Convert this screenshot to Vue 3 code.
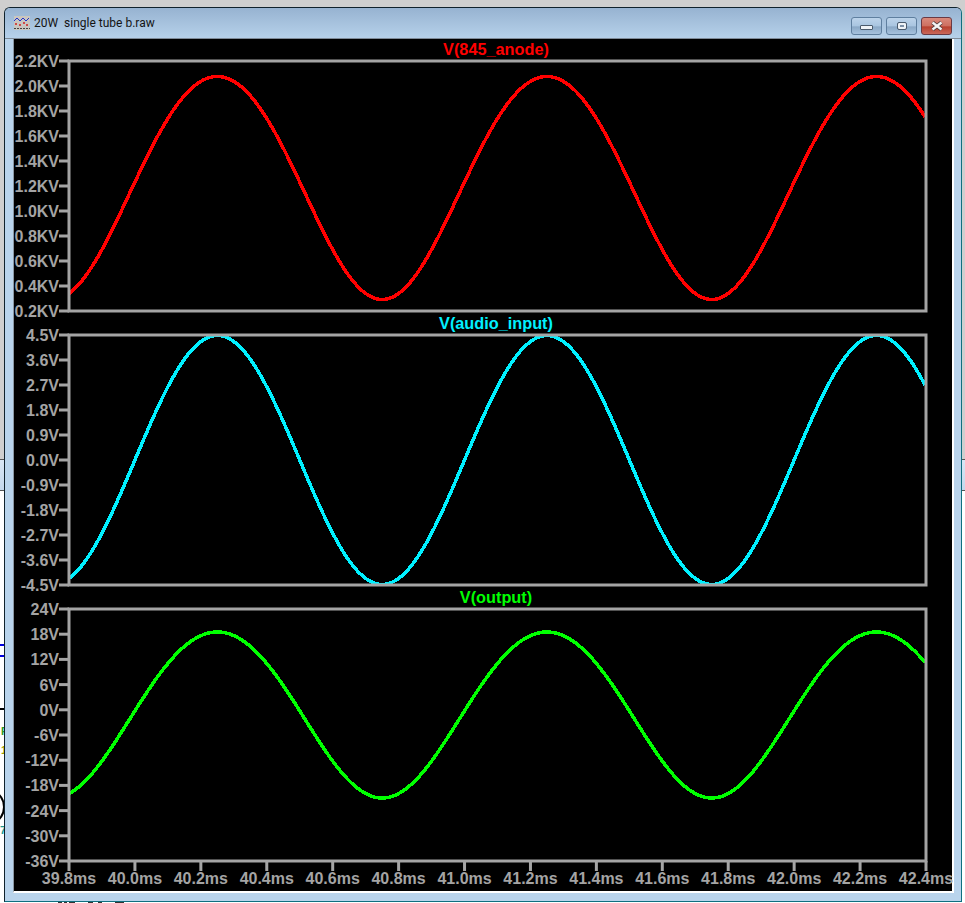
<template>
  <div class="desktop">
    <!-- Schematic editor behind the waveform window -->
    <div class="backdrop">
      <div class="back-top"></div>
      <div class="back-menu"></div>
      <div class="back-sheet"></div>
    </div>
    <svg class="schematic" width="965" height="903">
      <path d="M0 645H5M0 656H5" stroke="#0000e0" stroke-width="2" />
      <path d="M0 709H5" stroke="#000" stroke-width="2" />
      <circle cx="-14" cy="807" r="18" fill="none" stroke="#000" stroke-width="2" />
      <text x="1" y="735" class="bit green">F</text>
      <text x="1" y="754" class="bit olive">1</text>
      <text x="0" y="834" class="bit teal">7</text>
      <path d="M58 902.500h4M64 902.500h3M69 902.500h6M88 902.500h5M98 902.500h4M115 902.500h9" stroke="#333" stroke-width="1" />
    </svg>

    <section class="window">
      <header class="titlebar">
        <svg class="app-icon" width="17" height="16" viewBox="0 0 17 16">
          <rect x="0" y="1" width="16" height="14" fill="#c9c6c0" />
          <path d="M0 6 3 3l3 3 3-3 3 3 3-3" fill="none" stroke="#2233cc" stroke-width="1" />
          <path d="M1 9h2M5 10h2M9 8h2M12 10h2" stroke="#d02020" stroke-width="1.400" />
          <path d="M0 13.500h16" stroke="#444" stroke-width="1" stroke-dasharray="2 1" />
        </svg>
        <span class="caption">{{ caption }}</span>
        <div class="controls">
          <button class="ctl">
            <span class="min-glyph"></span>
          </button>
          <button class="ctl">
            <span class="max-glyph"></span>
          </button>
          <button class="ctl close">
            <svg width="14" height="10" viewBox="0 0 14 10">
              <path d="M2.500 1.500 11.500 8.500M11.500 1.500 2.500 8.500" stroke="#4a3a3a" stroke-width="4" />
              <path d="M2.500 1.500 11.500 8.500M11.500 1.500 2.500 8.500" stroke="#f4f4f4" stroke-width="2.400" />
            </svg>
          </button>
        </div>
      </header>

      <main class="plots">
        <div v-for="pane in panes" :key="pane.title" class="pane">
          <div class="pane-title" :style="{ color: pane.color }">{{ pane.title }}</div>
          <svg class="pane-plot" width="939" :height="pane.svgHeight">
            <g v-for="tick in pane.ticks" :key="tick.label">
              <line :x1="45" :x2="frameLeft" :y1="tick.y" :y2="tick.y" class="axis" />
              <text x="45" :y="tick.y + 6" text-anchor="end" class="axis-label">{{ tick.label }}</text>
            </g>
            <path :d="pane.path" fill="none" :stroke="pane.color" stroke-width="3.500" class="trace" />
            <rect
              :x="frameLeft"
              y="1"
              :width="frameRight - frameLeft"
              :height="pane.frameHeight"
              fill="none"
              class="axis"
            />
            <g v-if="pane.timeAxis">
              <g v-for="t in timeTicks" :key="t.label">
                <line :x1="t.x" :x2="t.x" :y1="pane.frameHeight + 1" :y2="pane.frameHeight + 11" class="axis" />
                <text :x="t.x" :y="pane.frameHeight + 24" text-anchor="middle" class="axis-label">{{ t.label }}</text>
              </g>
            </g>
          </svg>
        </div>
      </main>
    </section>
  </div>
</template>

<script setup>
const caption = '20W  single tube b.raw'

const frameLeft = 55
const frameRight = 912
const msWidth = (frameRight - frameLeft) / 2.6

// time of a px column inside the frame, relative to the peak at 40.25ms
const phase = (x) => (((x - frameLeft) / msWidth + 39.8 - 40.25) * 2 * Math.PI)

// skew adds some second harmonic: the tube stages flatten the top a little
const buildPath = (center, amp, skew = 0) => {
  let d = ''
  for (let x = frameLeft; x <= frameRight; x += 2) {
    const th = phase(x)
    const y = center - amp * (skew + Math.cos(th) - skew * Math.cos(2 * th))
    d += (d ? 'L' : 'M') + x + ' ' + y.toFixed(1)
  }
  return d
}

const yTicks = (labels, height) =>
  labels.map((label, i) => ({ label, y: 1 + (i * height) / (labels.length - 1) }))

const panes = [
  {
    title: 'V(845_anode)',
    color: '#ff0000',
    svgHeight: 254,
    frameHeight: 250,
    ticks: yTicks(
      ['2.2KV', '2.0KV', '1.8KV', '1.6KV', '1.4KV', '1.2KV', '1.0KV', '0.8KV', '0.6KV', '0.4KV', '0.2KV'],
      250,
    ),
    path: buildPath(128, 111.5, 0.027),
  },
  {
    title: 'V(audio_input)',
    color: '#00f0ff',
    svgHeight: 254,
    frameHeight: 250,
    ticks: yTicks(
      ['4.5V', '3.6V', '2.7V', '1.8V', '0.9V', '0.0V', '-0.9V', '-1.8V', '-2.7V', '-3.6V', '-4.5V'],
      250,
    ),
    path: buildPath(126, 124.5),
  },
  {
    title: 'V(output)',
    color: '#00ff00',
    svgHeight: 284,
    frameHeight: 252,
    ticks: yTicks(
      ['24V', '18V', '12V', '6V', '0V', '-6V', '-12V', '-18V', '-24V', '-30V', '-36V'],
      252,
    ),
    path: buildPath(107, 83, 0.025),
    timeAxis: true,
  },
]

const timeTicks = Array.from({ length: 14 }, (_, i) => ({
  label: (39.8 + i * 0.2).toFixed(1) + 'ms',
  x: frameLeft + i * ((frameRight - frameLeft) / 13),
}))
</script>

<style scoped>
.desktop {
  position: relative;
  width: 965px;
  height: 903px;
  overflow: hidden;
}

.backdrop {
  display: flex;
  flex-direction: column;
  height: 100%;
}
.back-top {
  height: 459px;
  background: #cfcfcf;
  border-bottom: 1px solid #555;
}
.back-menu {
  height: 30px;
  background: linear-gradient(#d8e6f4, #c4d8ec);
  border-bottom: 1px solid #555;
}
.back-sheet {
  flex: 1;
  background: #fff;
}

.schematic {
  position: absolute;
  top: 0;
  left: 0;
}
.bit {
  font: bold 11px "Liberation Sans", sans-serif;
}
.green { fill: #2a9a2a; }
.olive { fill: #a0a000; }
.teal { fill: #209a90; }

.window {
  position: absolute;
  left: 4px;
  top: 7px;
  width: 958px;
  height: 895px;
  box-sizing: border-box;
  display: flex;
  flex-direction: column;
  padding: 0 7px 8px 8px;
  background: #b9d4ec;
  border: 1px solid #10222c;
  border-right-color: #0f6f80;
  border-bottom-color: #0f6f80;
  border-radius: 6px 6px 0 0;
}

.titlebar {
  height: 30px;
  flex: none;
  display: flex;
  align-items: center;
  margin: 0 -7px 0 -8px;
  padding: 0 9px 0 9px;
  background: linear-gradient(#97b3d1, #b6d1ea);
  border-bottom: 1px solid #7f8b98;
  border-radius: 5px 5px 0 0;
}
.app-icon {
  flex: none;
}
.caption {
  margin-left: 3px;
  font: 12px Roboto, sans-serif;
  white-space: pre;
  color: #141414;
}
.controls {
  margin-left: auto;
  display: flex;
  gap: 4px;
  align-self: flex-start;
  margin-top: 9px;
}
.ctl {
  width: 31px;
  height: 18px;
  padding: 0;
  display: flex;
  align-items: center;
  justify-content: center;
  border: 1px solid #5f7f9f;
  border-radius: 3px;
  background: linear-gradient(#bcd3ea 0%, #a9c5e0 50%, #8aa8c6 55%, #a6c2de 100%);
}
.close {
  border-color: #6a3a44;
  background: linear-gradient(#d98a7c 0%, #cd6f60 50%, #b8402e 55%, #c9685a 100%);
}
.min-glyph {
  width: 11px;
  height: 3px;
  margin-top: 3px;
  background: #eef2f6;
  border: 1px solid #4a5a6c;
  border-radius: 1px;
}
.max-glyph {
  width: 4px;
  height: 2px;
  background: #7f92a8;
  border: 2px solid #eef2f6;
  outline: 1px solid #4a5a6c;
  border-radius: 1px;
}

.plots {
  flex: 1;
  min-height: 0;
  padding-top: 1px;
  background: #000;
  border-right: 2px solid #fff;
  border-bottom: 2px solid #fff;
  border-left: 1px solid #8a97a3;
}
.pane-title {
  height: 20px;
  padding-left: 26px;
  text-align: center;
  font: bold 16.3px/18px "Liberation Sans", sans-serif;
}
.pane-plot {
  display: block;
  overflow: visible;
}
.trace {
  shape-rendering: crispEdges;
}
.axis {
  stroke: #a4a4a4;
  stroke-width: 3;
}
.axis-label {
  fill: #a4a4a4;
  font: bold 16px "Liberation Sans", sans-serif;
}
</style>
